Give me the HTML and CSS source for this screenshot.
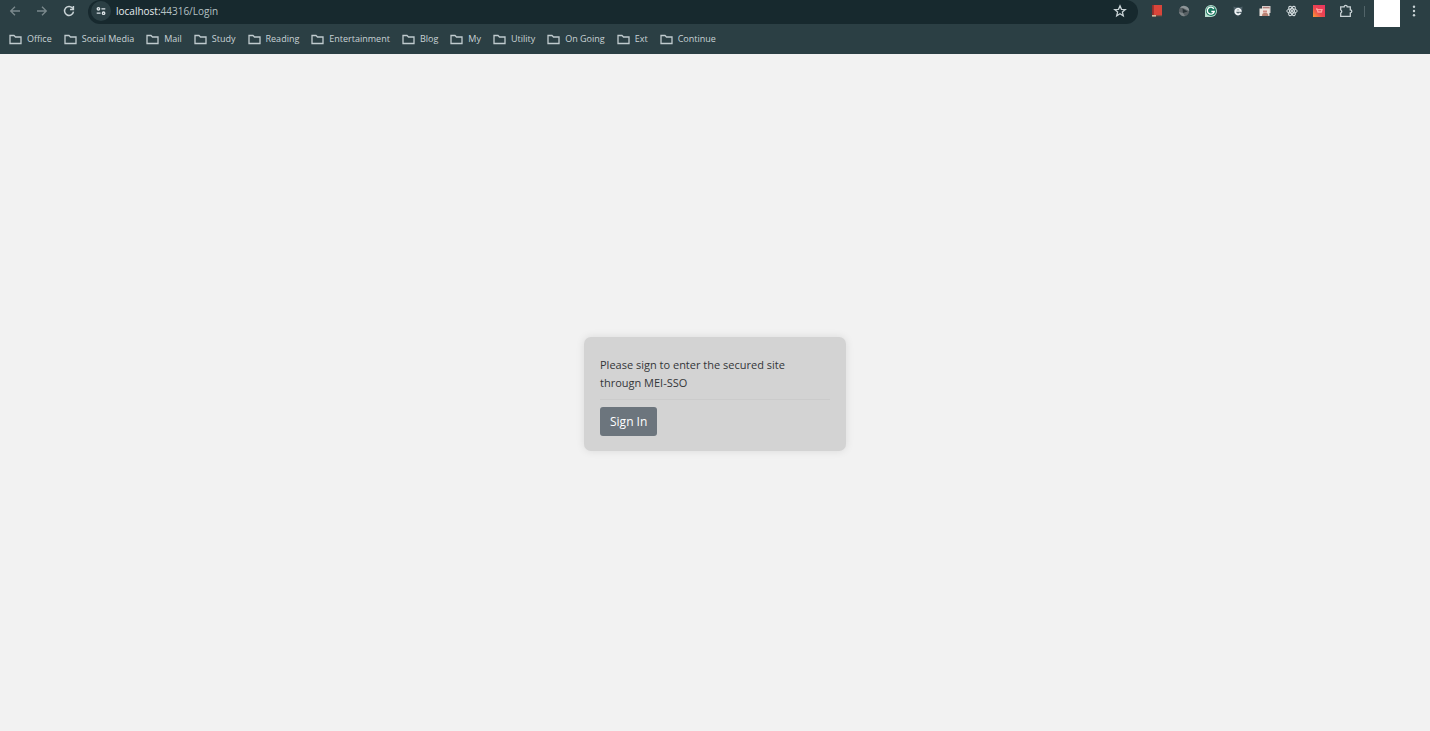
FILE: index.html
```html
<!DOCTYPE html>
<html lang="en">
<head>
<meta charset="utf-8">
<title>Login</title>
<link rel="stylesheet" href="styles.css">
</head>
<body>
<header class="browser">
  <div class="toolbar">
    <nav class="history" aria-label="History">
      <button class="icon-btn dim" type="button" aria-label="Back"><svg viewBox="0 0 14 14"><path d="M12 7H3M7 2.7L2.7 7L7 11.3"/></svg></button>
      <button class="icon-btn dim" type="button" aria-label="Forward"><svg viewBox="0 0 14 14"><path d="M2 7h9M7 2.7L11.3 7L7 11.3"/></svg></button>
      <button class="icon-btn reload" type="button" aria-label="Reload"><svg viewBox="0 0 14 14"><path d="M10.8 4.4A4.5 4.5 0 1 0 11.5 7.6M11.4 2v3.4H8"/></svg></button>
    </nav>
    <div class="omnibox">
      <button class="site-info" type="button" aria-label="Site information"><svg viewBox="0 0 14 14"><circle cx="4" cy="4.5" r="1.4"/><path d="M7.5 4.5H12M2 9.5h4.5"/><circle cx="10" cy="9.5" r="1.4"/></svg></button>
      <div class="url"><span class="host">localhost:</span>44316/Login</div>
      <button class="icon-btn star" type="button" aria-label="Bookmark this page"><svg viewBox="0 0 14 14"><path d="M7 1.8l1.5 3.5 3.8.3-2.9 2.5.9 3.7L7 9.8l-3.3 2 .9-3.7-2.9-2.5 3.8-.3z"/></svg></button>
    </div>
    <div class="extensions">
      <button class="icon-btn" type="button" aria-label="Dictionary"><svg viewBox="0 0 14 14" class="art"><path d="M3 1h9v10H3z" fill="#d9453a"/><path d="M2 1h1.800v10H2z" fill="#8f302d"/><path d="M3 11h9v1.300H3z" fill="#8a4f42"/><path d="M2 11h4v1.600H2z" fill="#cdbb9c"/></svg></button>
      <button class="icon-btn" type="button" aria-label="Media capture"><svg viewBox="0 0 14 14" class="art"><circle cx="7" cy="7" r="5.2" fill="#596165"/><path d="M3 3.7A5.2 5.2 0 0 1 12.2 7L6 4z" fill="#8d9598"/><path d="M2 8l4 1 2 3a5 5 0 0 1-6-4z" fill="#7d8588"/><path d="M5.5 4.5L10.5 7.5L6 9z" fill="#273236"/></svg></button>
      <button class="icon-btn" type="button" aria-label="Writing assistant"><svg viewBox="0 0 14 14" class="art"><path d="M7 1a6 6 0 1 1 0 12H1V7a6 6 0 0 1 6-6z" fill="#b5dccd"/><circle cx="7" cy="7" r="5.1" fill="#18765f"/><path d="M9.8 4.8A3.5 3.5 0 1 0 10.2 7.5H7.3" fill="none" stroke="#fff" stroke-width="1.4"/></svg></button>
      <button class="icon-btn" type="button" aria-label="Page tool"><svg viewBox="0 0 14 14" class="art"><path d="M2.5 2.5l2 .7h5l2-.7-.7 7L7 12.500 3.200 9.500z" fill="#52646c"/><path d="M4.200 7h5.600A2.800 2.800 0 1 0 9.400 9" fill="none" stroke="#f2f6f8" stroke-width="1.700"/></svg></button>
      <button class="icon-btn" type="button" aria-label="Image tool"><svg viewBox="0 0 14 14" class="art"><path d="M4 2h8.5v7H4z" fill="#d5cbc8"/><path d="M5 3.2h6.5v1.3H5z" fill="#a96d69"/><path d="M1.5 4.5h10v7.5h-10z" fill="#eee5df"/><path d="M4 12a3.2 3.2 0 0 1 6.4 0z" fill="#b98172"/><path d="M5 6.5h4v2H5z" fill="#cf8b83"/></svg></button>
      <button class="icon-btn" type="button" aria-label="Component inspector"><svg viewBox="0 0 14 14" class="art atom"><ellipse cx="7" cy="7" rx="5.2" ry="2.1"/><ellipse cx="7" cy="7" rx="5.2" ry="2.1" transform="rotate(60 7 7)"/><ellipse cx="7" cy="7" rx="5.2" ry="2.1" transform="rotate(120 7 7)"/><circle cx="7" cy="7" r=".8" fill="#e4eaec"/></svg></button>
      <button class="icon-btn" type="button" aria-label="Shopping"><svg viewBox="0 0 14 14" class="art"><defs><linearGradient id="shop" x1="1" y1="0" x2="0" y2="1"><stop stop-color="#e93460"/><stop offset=".55" stop-color="#ec4450"/><stop offset="1" stop-color="#fa9c35"/></linearGradient></defs><path d="M1 1h12v12H1z" fill="url(#shop)"/><path d="M4 5h1l1 3h3.3l.7-2.300H5.500" fill="none" stroke="#ff9f9b"/></svg></button>
      <button class="icon-btn" type="button" aria-label="Extensions"><svg viewBox="0 0 14 14"><path d="M1.7 2.8h3.5a1.5 1.5 0 0 1 3 0h3.1v3a1.5 1.5 0 0 1 0 3v3.5H1.7V9a1.6 1.6 0 0 0 0-3z"/></svg></button>
    </div>
    <span class="divider"></span>
    <button class="profile" type="button" aria-label="Profile"></button>
    <button class="icon-btn menu" type="button" aria-label="Menu"><svg viewBox="0 0 14 14"><circle cx="7" cy="2.8" r="1.2"/><circle cx="7" cy="7" r="1.2"/><circle cx="7" cy="11.2" r="1.2"/></svg></button>
  </div>
  <nav class="bookmarks" aria-label="Bookmarks">
    <svg class="symbols" aria-hidden="true"><symbol id="folder" viewBox="0 0 13 11"><path d="M1 1.5h4l1.5 1.5H12v6.5H1z"/></symbol></svg>
    <button type="button"><svg><use href="#folder"/></svg>Office</button>
    <button type="button"><svg><use href="#folder"/></svg>Social Media</button>
    <button type="button"><svg><use href="#folder"/></svg>Mail</button>
    <button type="button"><svg><use href="#folder"/></svg>Study</button>
    <button type="button"><svg><use href="#folder"/></svg>Reading</button>
    <button type="button"><svg><use href="#folder"/></svg>Entertainment</button>
    <button type="button"><svg><use href="#folder"/></svg>Blog</button>
    <button type="button"><svg><use href="#folder"/></svg>My</button>
    <button type="button"><svg><use href="#folder"/></svg>Utility</button>
    <button type="button"><svg><use href="#folder"/></svg>On Going</button>
    <button type="button"><svg><use href="#folder"/></svg>Ext</button>
    <button type="button"><svg><use href="#folder"/></svg>Continue</button>
  </nav>
</header>
<main class="page">
  <section class="card">
    <p>Please sign to enter the secured site througn MEI-SSO</p>
    <hr>
    <button class="sign-in" type="button">Sign In</button>
  </section>
</main>
</body>
</html>
```
FILE: styles.css
```css
* { box-sizing: border-box; }
body {
  margin: 0;
  min-height: 100vh;
  display: flex;
  flex-direction: column;
  background: #f2f2f2;
  font-family: "Open Sans", "Noto Sans", sans-serif;
}
button {
  margin: 0;
  padding: 0;
  border: 0;
  background: none;
  color: inherit;
  font: inherit;
}
.browser { background: #2b3f44; color: #c9d3d6; }
.toolbar { display: flex; align-items: center; height: 24px; padding: 0 9px 2px 8px; }
.history { display: flex; gap: 13px; padding-right: 12px; }
.icon-btn { flex: none; width: 14px; height: 14px; }
.icon-btn svg { display: block; width: 14px; height: 14px; fill: none; stroke: #c9d3d6; stroke-width: 1.3; }
.icon-btn.dim svg { stroke: #7b898d; }
.reload svg { stroke-width: 1.5; }
.icon-btn .art { stroke: none; }
.icon-btn .atom { fill: none; stroke: #dce4e7; stroke-width: 0.9; }
.omnibox {
  flex: 1;
  align-self: flex-start;
  display: flex;
  align-items: center;
  height: 24px;
  padding: 0 11px 2px 3px;
  border-radius: 12px;
  background: #17292e;
}
.site-info {
  display: grid;
  place-items: center;
  width: 20px;
  height: 20px;
  border-radius: 50%;
  background: #2b3f44;
}
.site-info svg { width: 12px; height: 12px; fill: none; stroke: #dce4e7; stroke-width: 1.6; }
.url { flex: 1; padding-left: 5px; font-size: 10px; line-height: 14px; color: #b5c1c4; }
.host { color: #e6edef; }
.extensions { display: flex; gap: 13px; padding: 0 11px 0 12px; }
.divider { width: 1px; height: 11px; background: #526469; }
.profile { align-self: flex-start; width: 26px; height: 27px; margin: 0 7px 0 9px; background: #fff; }
.menu svg { fill: #c9d3d6; stroke: none; }
.bookmarks {
  display: flex;
  align-items: center;
  gap: 12px;
  height: 30px;
  padding: 0 9px;
  font-size: 9px;
  line-height: 12px;
}
.bookmarks button { display: flex; align-items: center; gap: 5px; white-space: nowrap; }
.bookmarks button svg { width: 13px; height: 11px; fill: none; stroke: #c0cbce; stroke-width: 1.3; }
.symbols { position: absolute; width: 0; height: 0; }
.page { flex: 1; display: grid; place-items: center; padding: 3px 0 0; }
.card {
  width: 262px;
  padding: 19px 16px 15px;
  border-radius: 7px;
  background: #d3d3d3;
  box-shadow: 0 0 8px rgba(0, 0, 0, 0.1);
  color: #333639;
  font-size: 12px;
  line-height: 18px;
}
.card p { margin: 0; padding-right: 16px; font-size: 11px; }
.card hr { margin: 7px 0; border: 0; border-top: 1px solid #cbcbcb; }
.sign-in {
  display: block;
  padding: 6px 10px 5px;
  border-radius: 3px;
  background: #6c757d;
  color: #fff;
}
```
